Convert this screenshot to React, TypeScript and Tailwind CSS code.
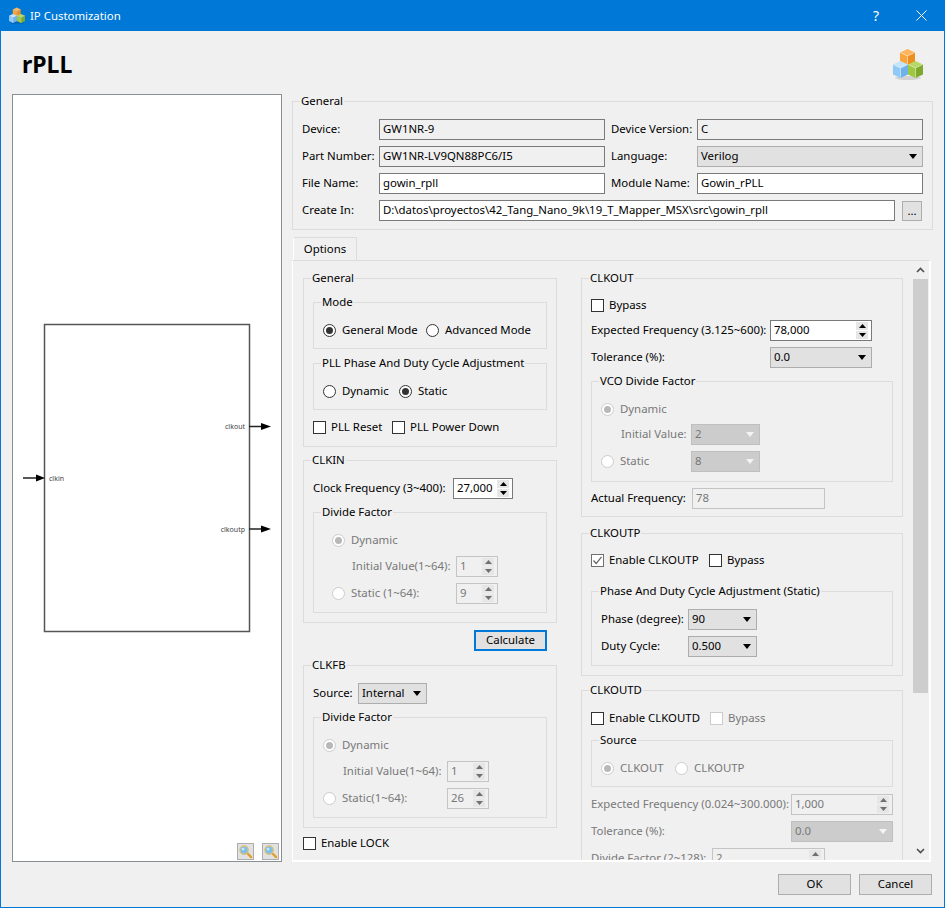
import React from "react";

const Cubes = ({ className }: { className: string }) => {
  const cube = (x: number, y: number, top: string, left: string, right: string) => (
    <g transform={`translate(${x} ${y})`}>
      <polygon points="7.5,0 15,3.5 7.5,7 0,3.5" fill={top} />
      <polygon points="0,3.5 7.5,7 7.5,17 0,13.5" fill={left} />
      <polygon points="15,3.5 7.5,7 7.5,17 15,13.5" fill={right} />
      <path d="M0.5 3.7 7.5 7 14.5 3.7M7.5 7V16.5" stroke="#ffffff" strokeOpacity="0.55" strokeWidth="0.7" fill="none" />
    </g>
  );
  return (
    <svg viewBox="0 0 30 32" className={className}>
      <ellipse cx="15" cy="30" rx="13" ry="2" fill="#000000" opacity="0.12" />
      {cube(7, 1, "#fdb65f", "#f9a53a", "#ec8f22")}
      {cube(0, 13, "#c4e3fc", "#8fc9f7", "#6fb1ec")}
      {cube(15, 13, "#b6d968", "#9dc840", "#7fa92c")}
    </svg>
  );
};

const Lens = () => (
  <svg viewBox="0 0 16 16" className="h-[15px] w-[15px]">
    <path d="M9.5 9.5 14 14" stroke="#e0a030" strokeWidth="2.4" strokeLinecap="round" />
    <circle cx="6.5" cy="6.5" r="4.4" fill="#7cc0ec" stroke="#d9bd7a" strokeWidth="1.4" />
    <circle cx="5.4" cy="5.4" r="1.5" fill="#c9e8fb" />
  </svg>
);

const Tri = ({ up, off }: { up?: boolean; off?: boolean }) => (
  <svg viewBox="0 0 7 4" className="h-[4px] w-[7px]">
    <polygon points={up ? "0,4 7,4 3.5,0" : "0,0 7,0 3.5,4"} fill={off ? "#707070" : "#000000"} />
  </svg>
);

const Group = ({ title, className = "", children }: { title: string; className?: string; children: React.ReactNode }) => (
  <fieldset className={`border border-[#dcdcdc] px-[9px] ${className}`}>
    <legend className="-ml-[2px] h-[15px] px-[1px] leading-[13px]">{title}</legend>
    {children}
  </fieldset>
);

const Row = ({ className = "", children }: { className?: string; children: React.ReactNode }) => (
  <div className={`flex h-[21px] items-center ${className}`}>{children}</div>
);

// the bottom margin lifts the text by a pixel inside its centred row
const Label = ({ className = "", children }: { className?: string; children: React.ReactNode }) => (
  <span className={`mb-[2px] ${className}`}>{children}</span>
);

const Radio = ({ label, on, off, className = "" }: { label: string; on?: boolean; off?: boolean; className?: string }) => (
  <div className={`flex items-center ${off ? "text-[#787878]" : ""} ${className}`}>
    <span className={`mr-[6px] flex h-[13px] w-[13px] items-center justify-center rounded-full border ${off ? "border-[#cccccc] bg-white" : "border-[#333333] bg-white"}`}>
      {on && <span className={`h-[7px] w-[7px] rounded-full ${off ? "bg-[#b8b8b8]" : "bg-[#333333]"}`} />}
    </span>
    <Label>{label}</Label>
  </div>
);

const Check = ({ label, on, off, className = "" }: { label: string; on?: boolean; off?: boolean; className?: string }) => (
  <div className={`flex items-center ${off ? "text-[#787878]" : ""} ${className}`}>
    <span className={`mr-[5px] flex h-[13px] w-[13px] items-center justify-center border bg-white ${off ? "border-[#cccccc]" : on ? "border-[#707070]" : "border-[#333333]"}`}>
      {on && (
        <svg viewBox="0 0 11 11" className="h-[11px] w-[11px]">
          <path d="M1.5 5.5 4.2 8.5 9.5 1.8" stroke="#606060" strokeWidth="1.2" fill="none" />
        </svg>
      )}
    </span>
    <Label>{label}</Label>
  </div>
);

const Spin = ({ value, off, className = "" }: { value: string; off?: boolean; className?: string }) => (
  <div className={`flex h-[21px] items-center justify-between border pl-[3px] pr-[3px] ${off ? "border-[#c4c4c4] bg-[#f0f0f0] text-[#787878]" : "border-[#7a7a7a] bg-white"} ${className}`}>
    <Label>{value}</Label>
    <span className="flex h-[17px] w-[12px] flex-col gap-[1px]">
      <span className="flex h-[8px] items-center justify-center bg-[#e6e6e6]"><Tri up off={off} /></span>
      <span className="flex h-[8px] items-center justify-center bg-[#e6e6e6]"><Tri off={off} /></span>
    </span>
  </div>
);

const Combo = ({ value, off, className = "" }: { value: string; off?: boolean; className?: string }) => (
  <div className={`flex h-[21px] items-center justify-between border pl-[3px] pr-[5px] ${off ? "border-[#bfbfbf] bg-[#cccccc] text-[#787878]" : "border-[#adadad] bg-[#e1e1e1]"} ${className}`}>
    <Label>{value}</Label>
    <svg viewBox="0 0 8 5" className="h-[5px] w-[8px]">
      <polygon points="0,0 8,0 4,5" fill={off ? "#f4f4f4" : "#000000"} />
    </svg>
  </div>
);

const Field = ({ value, off, className = "" }: { value: string; off?: boolean; className?: string }) => (
  <div className={`flex h-[21px] items-center border border-[#7a7a7a] pl-[3px] ${off ? "bg-[#f0f0f0]" : "bg-white"} ${className}`}>
    <Label>{value}</Label>
  </div>
);

const Preview = () => (
  <div className="relative h-[768px] w-[270px] border border-[#8a8f94] bg-white">
    <svg viewBox="13 95 268 766" className="h-full w-full">
      <rect x="44.5" y="324.5" width="205" height="307" fill="none" stroke="#555555" strokeWidth="1.5" />
      <path d="M23 478H37M249 426.5H263M249 529H263" stroke="#222222" strokeWidth="1.5" />
      <polygon points="36,474.5 45,478 36,481.5" fill="#000000" />
      <polygon points="261,423 271,426.5 261,430" fill="#000000" />
      <polygon points="261,525.5 271,529 261,532.5" fill="#000000" />
      <g fontSize="7" fill="#444444">
        <text x="49" y="481">clkin</text>
        <text x="245" y="429" textAnchor="end">clkout</text>
        <text x="245" y="532" textAnchor="end">clkoutp</text>
      </g>
    </svg>
    <div className="absolute bottom-[1px] right-[2px] flex gap-[8px]">
      <span className="flex h-[17px] w-[17px] items-center justify-center border border-[#adadad] bg-[#e1e1e1]"><Lens /></span>
      <span className="flex h-[17px] w-[17px] items-center justify-center border border-[#adadad] bg-[#e1e1e1]"><Lens /></span>
    </div>
  </div>
);

const LeftColumn = () => (
  <div className="flex w-[254px] shrink-0 flex-col">
    <Group title="General" className="pb-[8px] pt-[9px]">
      <Group title="Mode" className="pb-[7px] pt-[10px]">
        <Row>
          <Radio label="General Mode" on className="w-[103px]" />
          <Radio label="Advanced Mode" />
        </Row>
      </Group>
      <Group title="PLL Phase And Duty Cycle Adjustment" className="mt-[7px] pb-[7px] pt-[10px]">
        <Row>
          <Radio label="Dynamic" className="w-[76px]" />
          <Radio label="Static" on />
        </Row>
      </Group>
      <Row className="mt-[7px]">
        <Check label="PLL Reset" className="w-[79px]" />
        <Check label="PLL Power Down" />
      </Row>
    </Group>

    <Group title="CLKIN" className="mt-[6px] pb-[9px] pt-[10px]">
      <Row>
        <Label className="w-[140px]">Clock Frequency (3~400):</Label>
        <Spin value="27,000" className="w-[60px]" />
      </Row>
      <Group title="Divide Factor" className="mt-[6px] pb-[8px] pt-[10px]">
        <Row className="pl-[9px]"><Radio label="Dynamic" on off /></Row>
        <Row className="mt-[5px] text-[#787878]">
          <Label className="ml-[29px] w-[104px]">Initial Value(1~64):</Label>
          <Spin value="1" off className="w-[42px]" />
        </Row>
        <Row className="mt-[6px] pl-[9px] text-[#787878]">
          <Radio label="Static (1~64):" off className="w-[124px]" />
          <Spin value="9" off className="w-[42px]" />
        </Row>
      </Group>
    </Group>

    <button className="mr-[10px] mt-[7px] h-[21px] w-[73px] self-end border-2 border-[#0078d7] bg-[#e1e1e1] pb-[2px]">Calculate</button>

    <Group title="CLKFB" className="mt-[7px] pb-[9px] pt-[10px]">
      <Row>
        <Label className="w-[45px]">Source:</Label>
        <Combo value="Internal" className="w-[69px]" />
      </Row>
      <Group title="Divide Factor" className="mt-[6px] pb-[8px] pt-[10px]">
        <Row><Radio label="Dynamic" on off /></Row>
        <Row className="mt-[5px] text-[#787878]">
          <Label className="ml-[20px] w-[104px]">Initial Value(1~64):</Label>
          <Spin value="1" off className="w-[42px]" />
        </Row>
        <Row className="mt-[6px] text-[#787878]">
          <Radio label="Static(1~64):" off className="w-[124px]" />
          <Spin value="26" off className="w-[42px]" />
        </Row>
      </Group>
    </Group>

    <Row className="mt-[5px]"><Check label="Enable LOCK" /></Row>
  </div>
);

const RightColumn = () => (
  <div className="flex w-[322px] shrink-0 flex-col">
    <Group title="CLKOUT" className="pb-[7px] pt-[9px]">
      <Row><Check label="Bypass" /></Row>
      <Row className="mt-[4px]">
        <Label className="w-[179px]">Expected Frequency (3.125~600):</Label>
        <Spin value="78,000" className="w-[102px]" />
      </Row>
      <Row className="mt-[6px]">
        <Label className="w-[179px]">Tolerance (%):</Label>
        <Combo value="0.0" className="w-[102px]" />
      </Row>
      <Group title="VCO Divide Factor" className="mt-[6px] pb-[9px] pt-[10px]">
        <Row><Radio label="Dynamic" on off /></Row>
        <Row className="mt-[4px] text-[#787878]">
          <Label className="ml-[20px] w-[70px]">Initial Value:</Label>
          <Combo value="2" off className="w-[69px]" />
        </Row>
        <Row className="mt-[6px] text-[#787878]">
          <Radio label="Static" off className="w-[90px]" />
          <Combo value="8" off className="w-[69px]" />
        </Row>
      </Group>
      <Row className="mt-[6px]">
        <Label className="w-[101px]">Actual Frequency:</Label>
        <div className="flex h-[21px] w-[133px] items-center border border-[#c4c4c4] pl-[3px] text-[#787878]">
          <Label>78</Label>
        </div>
      </Row>
    </Group>

    <Group title="CLKOUTP" className="mt-[9px] pb-[9px] pt-[9px]">
      <Row>
        <Check label="Enable CLKOUTP" on className="w-[118px]" />
        <Check label="Bypass" />
      </Row>
      <Group title="Phase And Duty Cycle Adjustment (Static)" className="mt-[13px] pb-[8px] pt-[10px]">
        <Row>
          <Label className="w-[87px]">Phase (degree):</Label>
          <Combo value="90" className="w-[69px]" />
        </Row>
        <Row className="mt-[6px]">
          <Label className="w-[87px]">Duty Cycle:</Label>
          <Combo value="0.500" className="w-[69px]" />
        </Row>
      </Group>
    </Group>

    <Group title="CLKOUTD" className="mt-[7px] pb-[9px] pt-[10px]">
      <Row>
        <Check label="Enable CLKOUTD" className="w-[119px]" />
        <Check label="Bypass" off />
      </Row>
      <Group title="Source" className="mt-[4px] pb-[7px] pt-[10px]">
        <Row>
          <Radio label="CLKOUT" on off className="w-[74px]" />
          <Radio label="CLKOUTP" off />
        </Row>
      </Group>
      <Row className="mt-[7px] text-[#787878]">
        <Label className="w-[200px]">Expected Frequency (0.024~300.000):</Label>
        <Spin value="1,000" off className="w-[102px]" />
      </Row>
      <Row className="mt-[6px] text-[#787878]">
        <Label className="w-[200px]">Tolerance (%):</Label>
        <Combo value="0.0" off className="w-[102px]" />
      </Row>
      <Row className="mt-[6px] text-[#787878]">
        <Label className="w-[121px]">Divide Factor (2~128):</Label>
        <Spin value="2" off className="w-[113px]" />
      </Row>
    </Group>
  </div>
);

const ScrollBar = () => (
  <div className="flex w-[15px] shrink-0 flex-col">
    <div className="flex h-[18px] items-center justify-center">
      <svg viewBox="0 0 9 6" className="h-[6px] w-[9px]"><path d="M1 5 4.5 1.5 8 5" stroke="#505050" strokeWidth="1.6" fill="none" /></svg>
    </div>
    <div className="h-[414px] bg-[#cdcdcd]" />
    <div className="flex-1" />
    <div className="flex h-[18px] items-center justify-center">
      <svg viewBox="0 0 9 6" className="h-[6px] w-[9px]"><path d="M1 1 4.5 4.5 8 1" stroke="#505050" strokeWidth="1.6" fill="none" /></svg>
    </div>
  </div>
);

const App = () => {
  return (
    <div
      className="flex h-[908px] w-[945px] flex-col overflow-hidden whitespace-nowrap border-x border-b border-[#0078d7] bg-[#f0f0f0] text-[11.4px] leading-[16px] text-[#000000]"
      style={{ fontFamily: '"Noto Sans", sans-serif' }}
    >
      {/* title bar */}
      <div className="-mx-[1px] flex h-[31px] shrink-0 items-center bg-[#0078d7] pl-[9px] pr-[18px] text-white">
        <Cubes className="h-[17px] w-[16px]" />
        <span className="ml-[5px] flex-1">IP Customization</span>
        <span className="mr-[37px] text-[14px]">?</span>
        <svg viewBox="0 0 11 11" className="h-[11px] w-[11px]">
          <path d="M0.5 0.5 10.5 10.5M10.5 0.5 0.5 10.5" stroke="#ffffff" strokeWidth="1" />
        </svg>
      </div>

      {/* heading */}
      <div className="flex h-[63px] shrink-0 items-start justify-between pl-[21px] pr-[21px] pt-[17px]">
        <span className="text-[23px] font-bold leading-[33px]">rPLL</span>
        <Cubes className="h-[32px] w-[30px]" />
      </div>

      <div className="flex h-[768px] shrink-0 gap-[10px] pl-[11px]">
        <Preview />
        <div className="flex w-[641px] flex-col">
          <Group title="General" className="pb-[8px] pt-[10px]">
            <Row>
              <Label className="w-[77px]">Device:</Label>
              <Field value="GW1NR-9" off className="w-[226px]" />
              <Label className="ml-[6px] w-[86px]">Device Version:</Label>
              <Field value="C" off className="w-[226px]" />
            </Row>
            <Row className="mt-[6px]">
              <Label className="w-[77px]">Part Number:</Label>
              <Field value="GW1NR-LV9QN88PC6/I5" off className="w-[226px]" />
              <Label className="ml-[6px] w-[86px]">Language:</Label>
              <Combo value="Verilog" className="w-[226px]" />
            </Row>
            <Row className="mt-[6px]">
              <Label className="w-[77px]">File Name:</Label>
              <Field value="gowin_rpll" className="w-[226px]" />
              <Label className="ml-[6px] w-[86px]">Module Name:</Label>
              <Field value="Gowin_rPLL" className="w-[226px]" />
            </Row>
            <Row className="mt-[6px]">
              <Label className="w-[77px]">Create In:</Label>
              <Field value="D:\datos\proyectos\42_Tang_Nano_9k\19_T_Mapper_MSX\src\gowin_rpll" className="w-[516px]" />
              <span className="ml-[7px] flex h-[20px] w-[20px] items-center justify-center border border-[#adadad] bg-[#e1e1e1]">...</span>
            </Row>
          </Group>

          <div className="mt-[7px] flex h-[23px] shrink-0 pl-[1px]">
            <div className="flex w-[64px] items-center justify-center border border-b-0 border-[#dcdcdc] border-l-white">Options</div>
          </div>

          <div className="flex h-[602px] w-[639px] shrink-0 overflow-hidden border-b-2 border-l border-r-2 border-t border-[#ffffff] border-t-[#dcdcdc]">
            <div className="flex h-[600px] w-[620px] shrink-0 gap-[24px] overflow-hidden pl-[10px] pt-[10px]">
              <LeftColumn />
              <RightColumn />
            </div>
            <ScrollBar />
          </div>
        </div>
      </div>

      <div className="flex justify-end gap-[8px] pr-[12px] pt-[12px]">
        <button className="h-[21px] w-[73px] border border-[#adadad] bg-[#e1e1e1] pb-[2px]">OK</button>
        <button className="h-[21px] w-[73px] border border-[#adadad] bg-[#e1e1e1] pb-[2px]">Cancel</button>
      </div>
    </div>
  );
};

export default App;
